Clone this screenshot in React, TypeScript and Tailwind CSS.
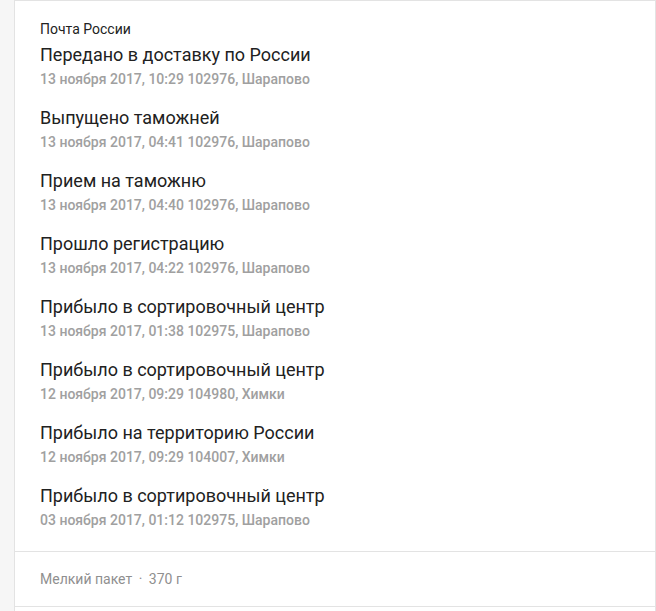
import React from "react";

const events = [
  { title: "Передано в доставку по России", meta: "13 ноября 2017, 10:29 102976, Шарапово" },
  { title: "Выпущено таможней", meta: "13 ноября 2017, 04:41 102976, Шарапово" },
  { title: "Прием на таможню", meta: "13 ноября 2017, 04:40 102976, Шарапово" },
  { title: "Прошло регистрацию", meta: "13 ноября 2017, 04:22 102976, Шарапово" },
  { title: "Прибыло в сортировочный центр", meta: "13 ноября 2017, 01:38 102975, Шарапово" },
  { title: "Прибыло в сортировочный центр", meta: "12 ноября 2017, 09:29 104980, Химки" },
  { title: "Прибыло на территорию России", meta: "12 ноября 2017, 09:29 104007, Химки" },
  { title: "Прибыло в сортировочный центр", meta: "03 ноября 2017, 01:12 102975, Шарапово" },
];

export default function App() {
  return (
    <div
      className="min-h-[611px] w-full bg-[#f6f6f6] pl-[14px] flex"
      style={{ fontFamily: "Roboto, 'Noto Sans', sans-serif" }}
    >
      <div className="flex-1 bg-white border-t border-l border-r border-[#e3e3e3] flex flex-col">
        <div className="px-[25px] pt-[20px] pb-[22px]">
          <p className="text-[14px] leading-[16px] text-[#222]">Почта России</p>
          <ul className="mt-[7px] flex flex-col gap-[19px]">
            {events.map((e, i) => (
              <li key={i} className="flex flex-col gap-[5px]">
                <span className="text-[18px] leading-[22px] text-[#212121]">{e.title}</span>
                <span className="text-[14px] leading-[17px] font-medium text-[#a0a0a0]">{e.meta}</span>
              </li>
            ))}
          </ul>
        </div>
        <div className="border-t border-b border-[#e3e3e3] h-[56px] pt-[1px] px-[25px] flex items-center">
          <span className="text-[14px] text-[#8f8f8f]">
            Мелкий пакет <span className="mx-[3px]">·</span> 370 г
          </span>
        </div>
      </div>
    </div>
  );
}
